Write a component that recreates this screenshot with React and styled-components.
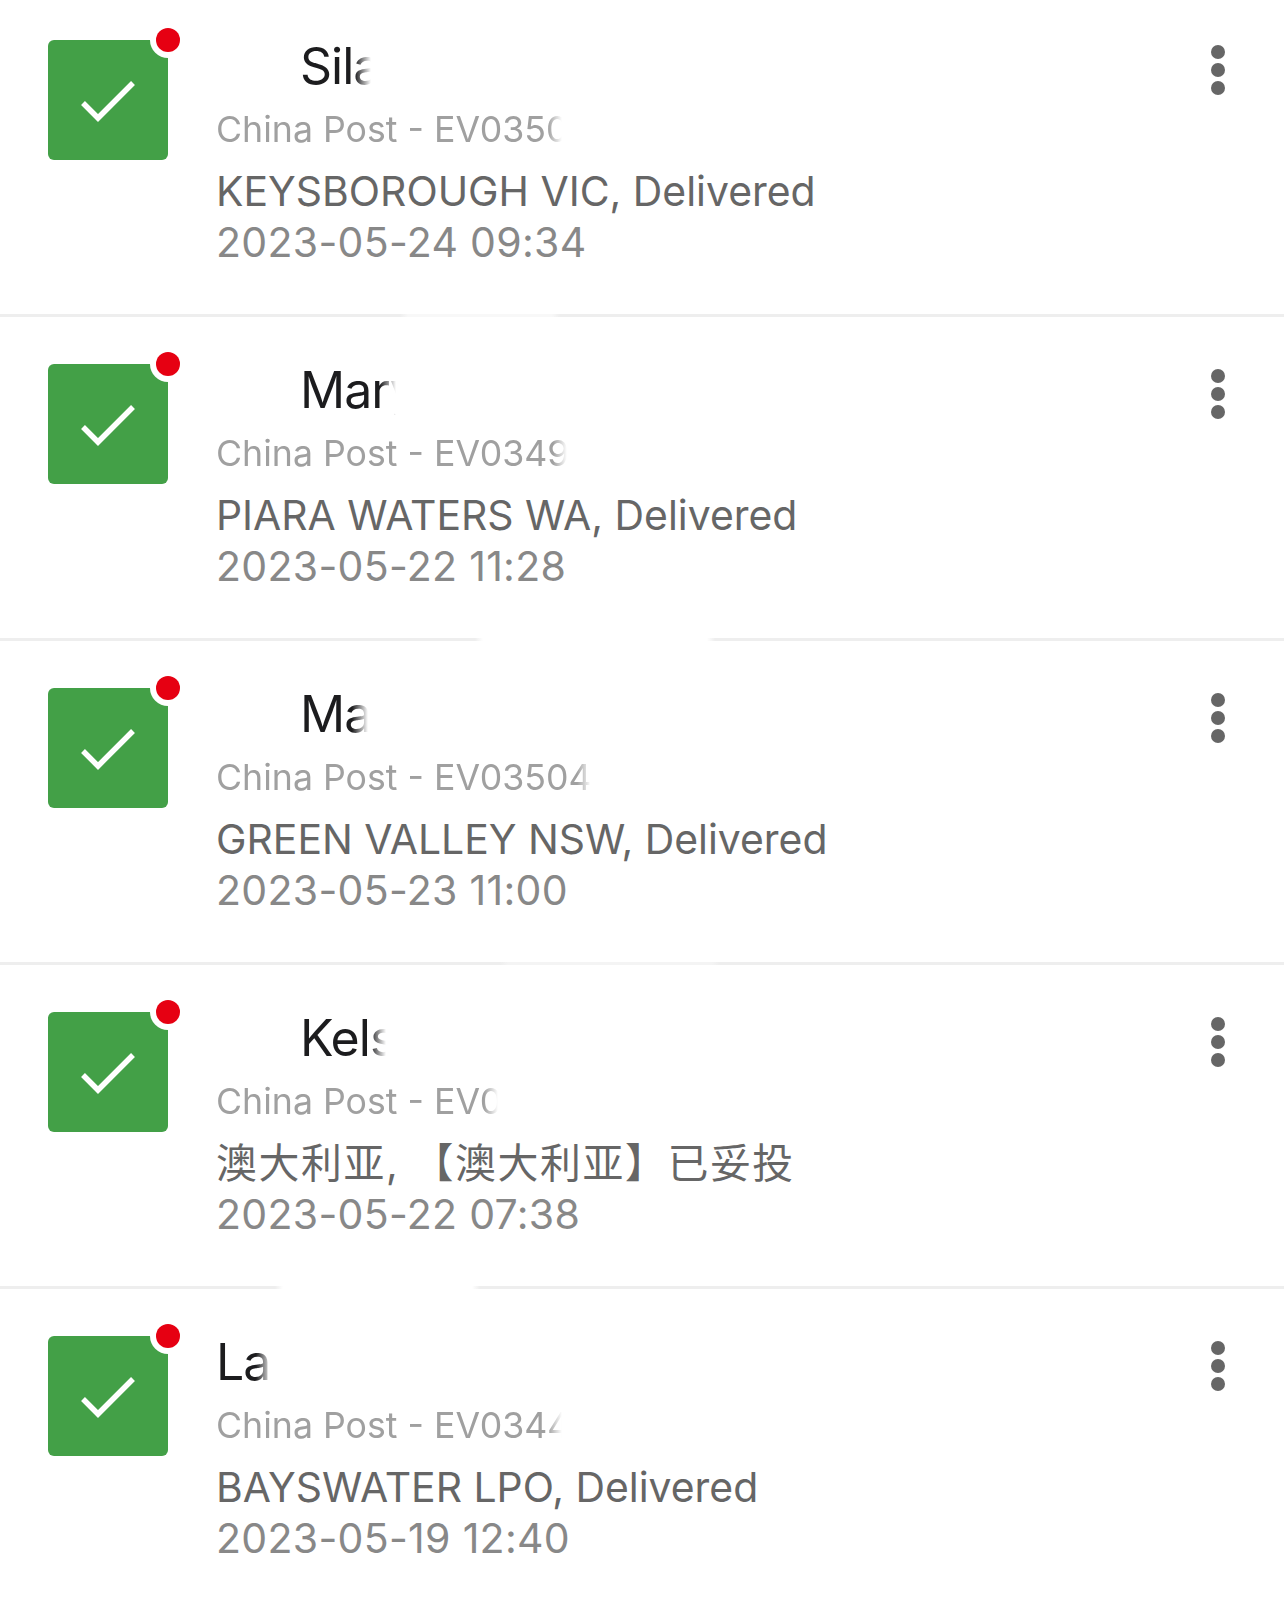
import styled, { createGlobalStyle } from 'styled-components';

const GlobalStyle = createGlobalStyle`
  html, body {
    margin: 0;
    padding: 0;
    background: #fff;
  }
  body {
    font-family: Inter, "Noto Sans CJK SC", sans-serif;
  }
`;

const List = styled.div`
  width: 1284px;
`;

const Row = styled.div`
  display: flex;
  align-items: flex-start;
  padding: 47px 59px 0 48px;
  height: 324px;
  box-sizing: border-box;
  position: relative;
  &:first-child {
    padding-top: 40px;
    height: 317px;
  }
`;

const Divider = styled.div`
  position: absolute;
  left: 0;
  right: 0;
  bottom: 0;
  height: 3px;
  background: linear-gradient(
    to right,
    #eee ${p => p.$from}px,
    ${p => p.$gapColor} ${p => p.$from + 8}px,
    ${p => p.$gapColor} ${p => p.$to - 8}px,
    #eee ${p => p.$to}px
  );
`;

const Tile = styled.div`
  position: relative;
  flex: none;
  width: 120px;
  height: 120px;
  border-radius: 6px;
  background: #43a047;
`;

const Dot = styled.span`
  position: absolute;
  top: -12px;
  right: -12px;
  width: 24px;
  height: 24px;
  border-radius: 50%;
  background: #e60012;
  box-shadow: 0 0 0 6px #fff;
`;

const Check = styled.svg`
  display: block;
  width: 120px;
  height: 120px;
`;

const Info = styled.div`
  flex: 1;
  margin-left: 48px;
  min-width: 0;
`;

const Name = styled.div`
  margin-left: ${p => p.$indent}px;
  height: 50px;
  margin-top: 1px;
  font-size: 50px;
  line-height: 50px;
  letter-spacing: -1px;
  color: #1c1c1e;
  white-space: nowrap;
  mask-image: linear-gradient(
    to right,
    #000 ${p => p.$fadeAt - 16}px,
    transparent ${p => p.$fadeAt}px
  );
`;

const Carrier = styled.div`
  margin-top: 14px;
  font-size: 35.7px;
  line-height: 48px;
  color: #a0a0a0;
  white-space: nowrap;
  mask-image: linear-gradient(
    to right,
    #000 ${p => p.$fadeAt - 14}px,
    transparent ${p => p.$fadeAt}px
  );
`;

const Location = styled.div`
  margin-top: 13px;
  font-size: 40.9px;
  line-height: 51px;
  letter-spacing: ${p => p.$spacing || 0}px;
  color: #666;
  white-space: nowrap;
`;

const Time = styled.div`
  font-size: 41px;
  line-height: 51px;
  letter-spacing: 0.3px;
  color: #888;
  white-space: nowrap;
`;

const Kebab = styled.div`
  flex: none;
  display: flex;
  flex-direction: column;
  gap: 4px;
  margin-top: 5px;
`;

const KebabDot = styled.span`
  width: 14px;
  height: 14px;
  border-radius: 50%;
  background: #666;
`;

const items = [
  { name: 'Sila', indent: 84, nameFade: 71, carrier: 'China Post - EV03500', carrierFade: 346, location: 'KEYSBOROUGH VIC, Delivered', time: '2023-05-24 09:34', gap: [400, 560], gapColor: '#f8f8f8' },
  { name: 'Mary', indent: 84, nameFade: 96, carrier: 'China Post - EV03495', carrierFade: 351, location: 'PIARA WATERS WA, Delivered', time: '2023-05-22 11:28', gap: [475, 715], gapColor: '#fff' },
  { name: 'Mas', indent: 84, nameFade: 68, carrier: 'China Post - EV03504', carrierFade: 375, location: 'GREEN VALLEY NSW, Delivered', time: '2023-05-23 11:00', gap: [500, 720], gapColor: '#f4f4f4' },
  { name: 'Kels', indent: 84, nameFade: 86, carrier: 'China Post - EV03', carrierFade: 282, location: '澳大利亚, 【澳大利亚】已妥投', locationSpacing: 1.6, time: '2023-05-22 07:38', gap: [275, 480], gapColor: '#fff' },
  { name: 'Lau', indent: 0, nameFade: 56, carrier: 'China Post - EV0344', carrierFade: 346, location: 'BAYSWATER LPO, Delivered', time: '2023-05-19 12:40' },
];

const App = () => (
  <List>
    <GlobalStyle />
    {items.map((item, i) => (
      <Row key={i}>
        <Tile>
          <Check viewBox="0 0 120 120" fill="none">
            <path d="M35 63 L50 78 L85 43" stroke="#fff" strokeWidth="5.5" strokeLinejoin="miter" />
          </Check>
          <Dot />
        </Tile>
        <Info>
          <Name $indent={item.indent} $fadeAt={item.nameFade}>{item.name}</Name>
          <Carrier $fadeAt={item.carrierFade}>{item.carrier}</Carrier>
          <Location $spacing={item.locationSpacing}>{item.location}</Location>
          <Time>{item.time}</Time>
        </Info>
        <Kebab>
          <KebabDot />
          <KebabDot />
          <KebabDot />
        </Kebab>
        {item.gap && <Divider $from={item.gap[0]} $to={item.gap[1]} $gapColor={item.gapColor} />}
      </Row>
    ))}
  </List>
);

export default App;
